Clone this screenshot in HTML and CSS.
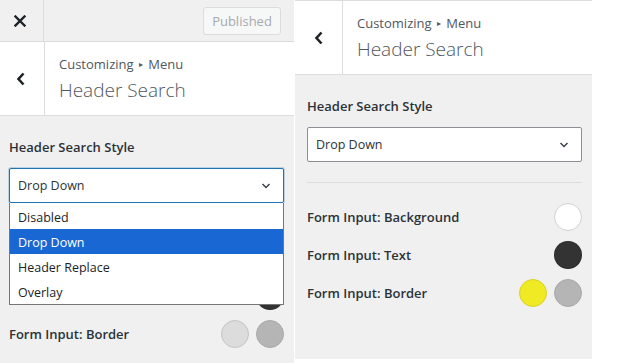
FILE: index.html
```html
<!DOCTYPE html>
<html lang="en">
<head>
    <meta charset="UTF-8">
    <meta name="viewport" content="width=device-width, initial-scale=1.0">
    <title>Header Search</title>
    <link rel="stylesheet" href="styles.css">
</head>
<body>
    <div class="stage">
        <!-- customizer with the select open -->
        <div class="panel panel-left">
            <div class="topbar">
                <button class="close-btn" aria-label="Close">
                    <svg width="12" height="12" viewBox="0 0 12 12"><path d="M1.5 1.5 L10.5 10.5 M10.5 1.5 L1.5 10.5" stroke="#1d2327" stroke-width="2.4" stroke-linecap="square"/></svg>
                </button>
                <div class="topbar-actions">
                    <button class="publish-btn" disabled>Published</button>
                </div>
            </div>
            <div class="section-head">
                <button class="back-btn" aria-label="Back">
                    <svg width="10" height="14" viewBox="0 0 10 14"><path d="M7.5 1.5 L2.5 7 L7.5 12.5" fill="none" stroke="#1d2327" stroke-width="2.6"/></svg>
                </button>
                <div class="section-title">
                    <span class="crumb">Customizing <span class="crumb-sep">&#9656;</span> Menu</span>
                    <h3>Header Search</h3>
                </div>
            </div>
            <div class="section-body">
                <label class="control-label">Header Search Style</label>
                <div class="select-wrap">
                    <div class="select is-open">
                        <span>Drop Down</span>
                        <svg width="10" height="6" viewBox="0 0 10 6"><path d="M1.5 1 L5 4.5 L8.5 1" fill="none" stroke="#3c434a" stroke-width="1.5"/></svg>
                    </div>
                    <ul class="select-options">
                        <li>Disabled</li>
                        <li class="selected">Drop Down</li>
                        <li>Header Replace</li>
                        <li>Overlay</li>
                    </ul>
                </div>
                <hr class="divider">
                <!-- these two rows sit under the open list -->
                <div class="color-row is-covered">
                    <span class="control-label">Form Input: Background</span>
                    <div class="swatches"><span class="swatch swatch-white"></span></div>
                </div>
                <div class="color-row is-covered">
                    <span class="control-label">Form Input: Text</span>
                    <div class="swatches"><span class="swatch swatch-dark"></span></div>
                </div>
                <div class="color-row">
                    <span class="control-label">Form Input: Border</span>
                    <div class="swatches">
                        <span class="swatch swatch-light"></span>
                        <span class="swatch swatch-grey"></span>
                    </div>
                </div>
            </div>
        </div>

        <!-- same section, select closed -->
        <div class="panel panel-right">
            <div class="section-head">
                <button class="back-btn" aria-label="Back">
                    <svg width="10" height="14" viewBox="0 0 10 14"><path d="M7.5 1.5 L2.5 7 L7.5 12.5" fill="none" stroke="#1d2327" stroke-width="2.6"/></svg>
                </button>
                <div class="section-title">
                    <span class="crumb">Customizing <span class="crumb-sep">&#9656;</span> Menu</span>
                    <h3>Header Search</h3>
                </div>
            </div>
            <div class="section-body">
                <label class="control-label">Header Search Style</label>
                <div class="select-wrap">
                    <div class="select">
                        <span>Drop Down</span>
                        <svg width="10" height="6" viewBox="0 0 10 6"><path d="M1.5 1 L5 4.5 L8.5 1" fill="none" stroke="#3c434a" stroke-width="1.5"/></svg>
                    </div>
                </div>
                <hr class="divider">
                <div class="color-row">
                    <span class="control-label">Form Input: Background</span>
                    <div class="swatches"><span class="swatch swatch-white"></span></div>
                </div>
                <div class="color-row">
                    <span class="control-label">Form Input: Text</span>
                    <div class="swatches"><span class="swatch swatch-dark"></span></div>
                </div>
                <div class="color-row">
                    <span class="control-label">Form Input: Border</span>
                    <div class="swatches">
                        <span class="swatch swatch-yellow"></span>
                        <span class="swatch swatch-grey"></span>
                    </div>
                </div>
            </div>
        </div>
    </div>
</body>
</html>
```

FILE: styles.css
```css
body {
    margin: 0;
    background-color: #fff;
    font-family: "Open Sans", "Noto Sans", sans-serif;
    color: #1d2327;
    overflow: hidden;
}
.stage {
    display: flex;
    align-items: flex-start;
}
.panel {
    flex: none;
    width: 297px;
    background-color: #f0f0f1;
    overflow: hidden;
}
.panel-left {
    margin-left: -3px;
    height: 363px;
}
.panel-right {
    margin-left: 1px;
    height: 358px;
    border-top: 1px solid #dcdcde;
}
.topbar {
    display: flex;
    height: 41px;
    border-bottom: 1px solid #dcdcde;
}
.close-btn {
    width: 47px;
    height: 41px;
    padding: 0;
    border: 0;
    border-right: 1px solid #dcdcde;
    background: transparent;
    display: flex;
    align-items: center;
    justify-content: center;
}
.topbar-actions {
    flex: 1;
    display: flex;
    justify-content: flex-end;
    align-items: center;
    padding-right: 13px;
}
.publish-btn {
    width: 78px;
    height: 28px;
    font-family: inherit;
    font-size: 13px;
    color: #a7aaad;
    background-color: #f6f7f7;
    border: 1px solid #dcdcde;
    border-radius: 3px;
    padding: 0;
}
.section-head {
    display: flex;
    height: 73px;
    background-color: #fff;
    border-bottom: 1px solid #dcdcde;
}
.back-btn {
    width: 48px;
    padding: 0;
    border: 0;
    border-right: 1px solid #dcdcde;
    background: transparent;
    display: flex;
    align-items: center;
    justify-content: center;
}
.section-title {
    padding: 13px 0 0 14px;
    display: flex;
    flex-direction: column;
}
.crumb {
    font-size: 13px;
    line-height: 18px;
    color: #50575e;
}
.crumb-sep {
    font-size: 8px;
    vertical-align: 2px;
    margin: 0 2px;
}
.section-title h3 {
    margin: 0;
    font-size: 19px;
    font-weight: 300;
    line-height: 26px;
    margin-top: 4px;
    color: #50575e;
}
.section-body {
    padding: 21px 10px 0 12px;
}
.control-label {
    display: block;
    font-size: 13px;
    font-weight: 600;
    line-height: 20px;
    color: #2c3338;
}
.section-body > .control-label {
    margin-bottom: 11px;
}
.select-wrap {
    position: relative;
}
.select {
    box-sizing: border-box;
    height: 35px;
    display: flex;
    align-items: center;
    justify-content: space-between;
    padding: 0 12px 0 8px;
    background-color: #fff;
    border: 1px solid #8c8f94;
    border-radius: 2px;
    font-size: 12.5px;
    color: #2c3338;
}
.select.is-open {
    border-color: #2271b1;
    box-shadow: 0 0 0 1px rgba(34, 113, 177, 0.25);
}
.select-options {
    position: absolute;
    top: 100%;
    left: 0;
    right: 0;
    margin: 0;
    padding: 1px 0 0;
    list-style: none;
    background-color: #fff;
    border: 1px solid #767676;
    border-top: 0;
    z-index: 2;
}
.select-options li {
    height: 25px;
    line-height: 28px;
    padding-left: 8px;
    font-size: 12.5px;
    color: #1d2327;
}
.select-options li.selected {
    background-color: #1967d2;
    color: #fff;
}
.divider {
    margin: 20px 0 0;
    border: 0;
    border-top: 1px solid #dcdcde;
}
.color-row {
    display: flex;
    align-items: center;
    justify-content: space-between;
    height: 28px;
    margin-top: 10px;
}
.divider + .color-row {
    margin-top: 20px;
}
.color-row.is-covered .control-label {
    visibility: hidden;
}
.swatches {
    display: flex;
    gap: 7px;
}
.swatch {
    box-sizing: border-box;
    width: 28px;
    height: 28px;
    border-radius: 50%;
    border: 1px solid rgba(0, 0, 0, 0.12);
}
.swatch-white {
    background-color: #fff;
    border-color: #d0d0d0;
}
.swatch-dark {
    background-color: #333;
}
.swatch-light {
    background-color: #dcdcdc;
    border-color: #c4c4c4;
}
.swatch-grey {
    background-color: #b5b5b5;
    border-color: #a9a9a9;
}
.swatch-yellow {
    background-color: #f0ea25;
    border-color: #d8d226;
}
```
